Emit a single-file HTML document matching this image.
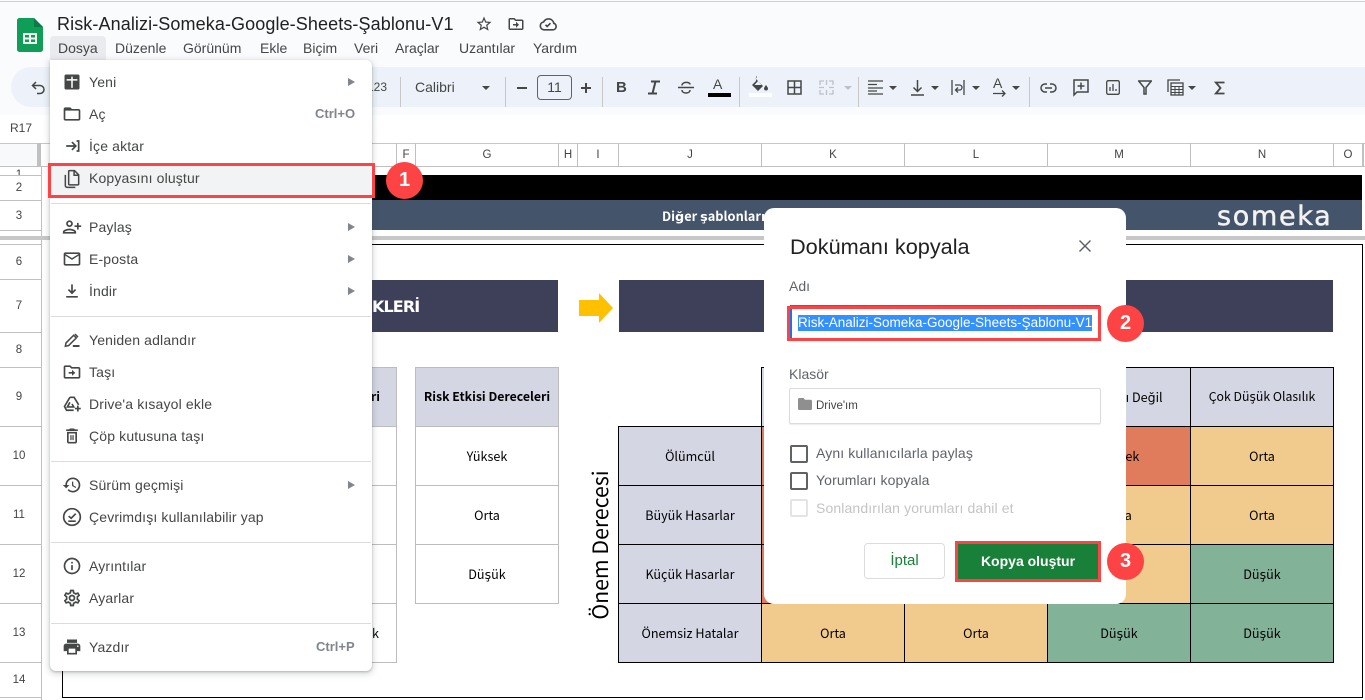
<!DOCTYPE html>
<html><head><meta charset="utf-8"><style>
html,body{margin:0;padding:0}
body{width:1365px;height:700px;overflow:hidden;position:relative;background:#fff;font-family:"Liberation Sans",sans-serif;color:#3c4043}
div,span,svg{position:absolute}
.t{white-space:nowrap;line-height:16px;height:16px}
.m{font-size:14px;color:#444746;top:40px}
.mi{font-size:14px;color:#444746;left:89px;letter-spacing:.15px}
.sc{font-size:13px;font-weight:bold;color:#80868b}
.ar{width:0;height:0;border-left:7px solid #80868b;border-top:4px solid transparent;border-bottom:4px solid transparent;left:348px}
.sep{left:51px;width:320px;height:1px;background:#dadce0}
.i{left:62px;width:20px;height:20px;fill:#444746}
.ch{top:143px;height:23px;border-right:1px solid #c0c0c0;font-size:11.500px;line-height:25px;text-align:center;color:#444;box-sizing:border-box}
.rl{left:0;width:41px;height:1px;background:#c0c0c0}
.rn{left:0;width:38px;text-align:center;font-size:11.500px;line-height:14px;color:#444}
.tv{width:1px;height:30px;top:77px;background:#c7c7c7}
.dd{width:0;height:0;border-top:4px solid #444746;border-left:4px solid transparent;border-right:4px solid transparent;top:86px}
.c{box-sizing:border-box;font-family:"Noto Sans CJK JP","DejaVu Sans",sans-serif;font-size:12.600px;color:#000;display:flex;align-items:center;justify-content:center;white-space:nowrap;padding-bottom:2px}
.b{font-size:12.300px;font-weight:bold}
.k{border:1px solid #000}
.g{border:1px solid #bdbdbd}
.cb{left:790px;width:18px;height:18px;box-sizing:border-box;border:2px solid #5f6368;border-radius:2px}
.cl{left:816px;font-size:14px;color:#5f6368;letter-spacing:.12px}
.badge{width:37px;height:37px;border-radius:50%;background:#fd4343;color:#fff;font-weight:bold;font-size:20px;line-height:37px;text-align:center}
</style></head><body>

<!-- top chrome -->
<div style="left:0;top:0;width:1365px;height:115px;background:#f9fbfd"></div>
<div style="left:0;top:1px;width:1365px;height:1px;background:#d0d0d0"></div>

<svg style="left:17px;top:18px;width:26px;height:34px" viewBox="0 0 26 34"><path d="M2.500 0H17l9 9v22.500a2.500 2.500 0 0 1-2.500 2.500h-21A2.500 2.500 0 0 1 0 31.500V2.500A2.500 2.500 0 0 1 2.500 0z" fill="#0f9d58"/><path d="M17 0l9 9h-9z" fill="#0b7a44"/><path d="M6 15h14v11H6z" fill="#f1f1f1"/><path d="M8 17h4v2.500H8zM14 17h4v2.500h-4zM8 21.500h4V24H8zM14 21.500h4V24h-4z" fill="#0f9d58"/></svg>

<div class="t" style="left:57px;top:14px;font-size:18px;line-height:20px;height:20px;color:#202124;letter-spacing:.1px">Risk-Analizi-Someka-Google-Sheets-Şablonu-V1</div>

<svg style="left:475px;top:15px;width:18px;height:18px;fill:#444746" viewBox="0 0 24 24"><path d="M22 9.240l-7.190-.62L12 2 9.190 8.630 2 9.240l5.460 4.730L5.820 21 12 17.270 18.180 21l-1.630-7.030L22 9.240zM12 15.400l-3.760 2.270 1-4.280-3.320-2.880 4.380-.38L12 6.100l1.710 4.040 4.380.38-3.320 2.880 1 4.280L12 15.400z"/></svg>
<svg style="left:507px;top:15px;width:18px;height:18px;fill:#444746" viewBox="0 0 24 24"><path d="M20 6h-8l-2-2H4c-1.100 0-2 .9-2 2v12c0 1.100.9 2 2 2h16c1.100 0 2-.9 2-2V8c0-1.100-.9-2-2-2zm0 12H4V6h5.170l2 2H20v10zm-8-1l4-4-4-4v3H8v2h4v3z"/></svg>
<svg style="left:538px;top:14px;width:20px;height:20px" viewBox="0 0 24 24" fill="none" stroke="#444746" stroke-width="2"><path d="M7 19h11a4 4 0 0 0 1-7.800A6.500 6.500 0 0 0 6.800 9.500 4.800 4.800 0 0 0 7 19z"/><path d="M9 13l2 2 4-4"/></svg>

<div style="left:50px;top:36px;width:56px;height:24px;background:#e9ebee;border-radius:4px 4px 0 0"></div>
<div class="t m" style="left:58px">Dosya</div>
<div class="t m" style="left:115px">Düzenle</div>
<div class="t m" style="left:183px">Görünüm</div>
<div class="t m" style="left:260px">Ekle</div>
<div class="t m" style="left:303px">Biçim</div>
<div class="t m" style="left:354px">Veri</div>
<div class="t m" style="left:395px">Araçlar</div>
<div class="t m" style="left:459px">Uzantılar</div>
<div class="t m" style="left:533px">Yardım</div>

<!-- toolbar -->
<div style="left:11px;top:67px;width:1400px;height:40px;background:#edf2fa;border-radius:20px"></div>
<svg style="left:30px;top:79px;width:18px;height:18px" viewBox="0 0 18 18" fill="none" stroke="#444746" stroke-width="1.500"><path d="M6 3L2.500 6.500 6 10"/><path d="M3 6.500h7a4 4 0 0 1 0 8H7"/></svg>
<div class="t" style="left:367px;top:79px;font-size:12px;color:#444746">123</div>
<div class="tv" style="left:400px"></div>
<div class="t" style="left:415px;top:79px;font-size:14px;color:#444746">Calibri</div>
<div class="dd" style="left:482px"></div>
<div class="tv" style="left:505px"></div>
<div style="left:517px;top:87px;width:10px;height:1.500px;background:#444746"></div>
<div style="left:537px;top:75px;width:35px;height:25px;box-sizing:border-box;border:1px solid #5f6368;border-radius:4px;font-size:14px;line-height:23px;text-align:center;color:#444746">11</div>
<div style="left:581px;top:87px;width:10px;height:1.500px;background:#444746"></div>
<div style="left:585.250px;top:83px;width:1.500px;height:10px;background:#444746"></div>
<div class="tv" style="left:602px"></div>
<div class="t" style="left:616px;top:80px;font-size:15px;font-weight:bold;color:#444746">B</div>
<svg style="left:647px;top:80px;width:14px;height:15px" viewBox="0 0 14 15" fill="none" stroke="#444746" stroke-width="2"><path d="M4 1.500h9M1 13.500h9M8.500 1.500l-3 12"/></svg>
<svg style="left:678px;top:79px;width:16px;height:17px" viewBox="0 0 16 17" fill="none" stroke="#444746" stroke-width="1.500"><path d="M0 8.500h16"/><path d="M4 6.500c0-4 8-4 8-1M4 11c0 4 8 4 8 0"/></svg>
<div class="t" style="left:713px;top:76px;font-size:14px;color:#444746">A</div>
<div style="left:708px;top:93px;width:23px;height:4px;background:#000"></div>
<div class="tv" style="left:739px"></div>
<svg style="left:751px;top:76px;width:18px;height:17px;fill:#444746" viewBox="0 0 18 17"><path d="M5 0l1 1-1.500 1.500L12 10l-5 5-6-6 4-4zM7 5L3.500 9h7z"/><path d="M15 9c1 1.500 2 2.500 2 3.500a2 2 0 0 1-4 0c0-1 1-2 2-3.500z"/></svg>
<div style="left:749px;top:93px;width:23px;height:4px;background:#fff"></div>
<svg style="left:787px;top:80px;width:15px;height:15px" viewBox="0 0 15 15" fill="none" stroke="#444746" stroke-width="1.500"><path d="M1 1h13v13H1zM7.500 1v13M1 7.500h13"/></svg>
<svg style="left:819px;top:80px;width:15px;height:15px" viewBox="0 0 15 15" fill="none" stroke="#bdc1c6" stroke-width="1.300"><path d="M1 5V1h4M10 1h4v4M1 10v4h4M10 14h4v-4M0 7.500h5M10 7.500h5M7.500 0v5M7.500 10v5"/></svg>
<div class="dd" style="left:844px;border-top-color:#bdc1c6"></div>
<div class="tv" style="left:858px"></div>
<svg style="left:868px;top:80px;width:15px;height:15px" viewBox="0 0 15 15" fill="none" stroke="#444746" stroke-width="1.300"><path d="M0 1h15M0 4.500h9M0 8h15M0 11h9M0 14h15"/></svg>
<div class="dd" style="left:889px"></div>
<svg style="left:911px;top:79px;width:13px;height:17px" viewBox="0 0 13 17" fill="none" stroke="#444746" stroke-width="1.500"><path d="M6.500 1v11M2.500 8.500l4 4 4-4M0 16h13"/></svg>
<div class="dd" style="left:931px"></div>
<svg style="left:951px;top:80px;width:14px;height:15px" viewBox="0 0 14 15" fill="none" stroke="#444746" stroke-width="1.300"><path d="M1 0v15M13 0v15M4 5h4.500a2.500 2.500 0 0 1 0 5H5M7 7.500L4.500 10 7 12.500"/></svg>
<div class="dd" style="left:972px"></div>
<div class="t" style="left:993px;top:75px;font-size:14px;color:#444746">A</div>
<svg style="left:993px;top:90px;width:14px;height:7px" viewBox="0 0 14 7" fill="none" stroke="#444746" stroke-width="1.300"><path d="M0 3.500h12M9 .5l3 3-3 3"/></svg>
<div class="dd" style="left:1012px"></div>
<div class="tv" style="left:1029px"></div>
<svg style="left:1040px;top:83px;width:17px;height:10px" viewBox="0 0 17 10" fill="none" stroke="#444746" stroke-width="1.500"><path d="M7 1H5a4 4 0 0 0 0 8h2M10 1h2a4 4 0 0 1 0 8h-2M5 5h7"/></svg>
<svg style="left:1073px;top:79px;width:16px;height:18px" viewBox="0 0 16 18" fill="none" stroke="#444746" stroke-width="1.500"><path d="M1 1h14v12H4l-3 3zM8 3.500v7M4.500 7h7"/></svg>
<svg style="left:1106px;top:80px;width:14px;height:15px" viewBox="0 0 14 15" fill="none" stroke="#444746" stroke-width="1.300"><rect x=".7" y=".7" width="12.600" height="13.600" rx="1.500"/><path d="M4 11V7M7 11V4M10 11V9"/></svg>
<svg style="left:1138px;top:80px;width:14px;height:15px" viewBox="0 0 14 15" fill="none" stroke="#444746" stroke-width="1.500"><path d="M.7 1h12.600L8 7.500V14H6V7.500z"/></svg>
<svg style="left:1167px;top:79px;width:17px;height:17px" viewBox="0 0 17 17" fill="none" stroke="#444746" stroke-width="1.300"><path d="M1 13V1h12"/><rect x="4" y="4" width="12" height="12"/><path d="M4 7.500h12M4 10.500h12M4 13.500h12M8 7.500V16M12 7.500V16" stroke-width="1"/></svg>
<div class="dd" style="left:1188px"></div>
<svg style="left:1214px;top:81px;width:11px;height:14px" viewBox="0 0 11 14" fill="none" stroke="#444746" stroke-width="1.800"><path d="M10.500 1.500H1.800L6.500 7l-4.700 5.500h8.700"/></svg>

<!-- formula bar -->
<div class="t" style="left:10px;top:120px;font-size:12px;color:#444">R17</div>
<div style="left:0;top:143px;width:1365px;height:1px;background:#c7c7c7"></div>

<!-- col headers -->
<div style="left:0;top:144px;width:37px;height:22px;background:#f8f9fa"></div>
<div style="left:37px;top:143px;width:4px;height:24px;background:#c0c0c0"></div>
<div style="left:41px;top:166px;width:1324px;height:1px;background:#c0c0c0"></div>
<div style="left:0;top:166px;width:41px;height:1px;background:#c0c0c0"></div>
<div class="ch" style="left:375px;width:22px"></div>
<div class="ch" style="left:397px;width:19px">F</div>
<div class="ch" style="left:416px;width:143px">G</div>
<div class="ch" style="left:559px;width:19px">H</div>
<div class="ch" style="left:578px;width:41px">I</div>
<div class="ch" style="left:619px;width:143px">J</div>
<div class="ch" style="left:762px;width:143px">K</div>
<div class="ch" style="left:905px;width:143px">L</div>
<div class="ch" style="left:1048px;width:143px">M</div>
<div class="ch" style="left:1191px;width:143px">N</div>
<div class="ch" style="left:1334px;width:29px">O</div>
<div style="left:1363px;top:143px;width:1px;height:23px;background:#c0c0c0"></div>

<!-- row headers -->
<div style="left:41px;top:167px;width:1px;height:533px;background:#c0c0c0"></div>
<div class="rl" style="top:175px"></div><div class="rl" style="top:200px"></div><div class="rl" style="top:230px"></div><div class="rl" style="top:244px"></div><div class="rl" style="top:279px"></div><div class="rl" style="top:332px"></div><div class="rl" style="top:367px"></div><div class="rl" style="top:426px"></div><div class="rl" style="top:485px"></div><div class="rl" style="top:544px"></div><div class="rl" style="top:603px"></div><div class="rl" style="top:662px"></div><div class="rl" style="top:697px"></div>
<div class="rn" style="top:168px;height:7px;overflow:hidden">1</div>
<div class="rn" style="top:181px">2</div>
<div class="rn" style="top:209px">3</div>
<div class="rn" style="top:255px">6</div>
<div class="rn" style="top:299px">7</div>
<div class="rn" style="top:343px">8</div>
<div class="rn" style="top:390px">9</div>
<div class="rn" style="top:449px">10</div>
<div class="rn" style="top:508px">11</div>
<div class="rn" style="top:567px">12</div>
<div class="rn" style="top:626px">13</div>
<div class="rn" style="top:673px">14</div>

<!-- sheet -->
<div style="left:62px;top:175px;width:1300px;height:25px;background:#000"></div>
<div style="left:62px;top:200px;width:1300px;height:30px;background:#44546a"></div>
<div class="t" style="left:662px;top:208px;font-family:'Noto Sans CJK JP','DejaVu Sans',sans-serif;font-size:12.800px;font-weight:bold;color:#fff">Diğer şablonları</div>
<div class="t" style="left:1217px;top:202px;height:30px;line-height:30px;font-size:27px;color:#f2f2f2;font-family:'DejaVu Sans',sans-serif;letter-spacing:1.700px;-webkit-text-stroke:.5px #f2f2f2">someka</div>

<div style="left:0;top:236px;width:1365px;height:4px;background:#c7c7c7"></div>
<div style="left:62px;top:244px;width:1301px;height:454px;box-sizing:border-box;border:1px solid #000"></div>

<div style="left:64px;top:280px;width:494px;height:52px;background:#3e4059"></div>
<div class="t" style="left:372px;top:297px;height:20px;line-height:20px;font-family:'DejaVu Sans',sans-serif;font-size:16px;font-weight:bold;color:#fff;letter-spacing:-.9px">KLERİ</div>
<svg style="left:579px;top:293px;width:35px;height:30px" viewBox="0 0 35 30"><path d="M0 7h20V0l14 15-14 15v-7H0z" fill="#ffc000"/></svg>
<div style="left:619px;top:280px;width:714px;height:52px;background:#3e4059"></div>

<!-- left tables -->
<div class="c g b" style="left:64px;top:367px;width:333px;height:60px;background:#d4d6e4;justify-content:flex-end;padding-right:16px">ri</div>
<div class="c g" style="left:64px;top:426px;width:333px;height:60px"></div>
<div class="c g" style="left:64px;top:485px;width:333px;height:60px"></div>
<div class="c g" style="left:64px;top:544px;width:333px;height:60px"></div>
<div class="c g" style="left:64px;top:603px;width:333px;height:60px;justify-content:flex-end;padding-right:17px">k</div>

<div class="c g b" style="left:415px;top:367px;width:144px;height:60px;background:#d4d6e4">Risk Etkisi Dereceleri</div>
<div class="c g" style="left:415px;top:426px;width:144px;height:60px">Yüksek</div>
<div class="c g" style="left:415px;top:485px;width:144px;height:60px">Orta</div>
<div class="c g" style="left:415px;top:544px;width:144px;height:60px">Düşük</div>

<div class="t" style="left:525px;top:532.500px;width:150px;height:24px;line-height:24px;text-align:center;font-family:'Noto Sans CJK JP','DejaVu Sans',sans-serif;font-size:21.300px;color:#000;transform:rotate(-90deg)">Önem Derecesi</div>

<!-- matrix -->
<div class="c k" style="left:618px;top:426px;width:144px;height:60px;background:#d4d6e4">Ölümcül</div>
<div class="c k" style="left:618px;top:485px;width:144px;height:60px;background:#d4d6e4">Büyük Hasarlar</div>
<div class="c k" style="left:618px;top:544px;width:144px;height:60px;background:#d4d6e4">Küçük Hasarlar</div>
<div class="c k" style="left:618px;top:603px;width:144px;height:60px;background:#d4d6e4">Önemsiz Hatalar</div>

<div class="c k" style="left:761px;top:367px;width:144px;height:60px;background:#d4d6e4"></div>
<div class="c k" style="left:904px;top:367px;width:144px;height:60px;background:#d4d6e4"></div>
<div class="c k" style="left:1047px;top:367px;width:144px;height:60px;background:#d4d6e4">Pek Olası Değil</div>
<div class="c k" style="left:1190px;top:367px;width:144px;height:60px;background:#d4d6e4;font-size:12.300px">Çok Düşük Olasılık</div>

<div class="c k" style="left:761px;top:426px;width:144px;height:60px;background:#e07b5c"></div>
<div class="c k" style="left:761px;top:485px;width:144px;height:60px;background:#e07b5c"></div>
<div class="c k" style="left:761px;top:544px;width:144px;height:60px;background:#e07b5c"></div>
<div class="c k" style="left:904px;top:426px;width:144px;height:60px;background:#e07b5c"></div>
<div class="c k" style="left:904px;top:485px;width:144px;height:60px;background:#f0cb8d"></div>
<div class="c k" style="left:904px;top:544px;width:144px;height:60px;background:#f0cb8d"></div>
<div class="c k" style="left:1047px;top:426px;width:144px;height:60px;background:#e07b5c">Yüksek</div>
<div class="c k" style="left:1047px;top:485px;width:144px;height:60px;background:#f0cb8d">Orta</div>
<div class="c k" style="left:1047px;top:544px;width:144px;height:60px;background:#f0cb8d">Orta</div>
<div class="c k" style="left:1190px;top:426px;width:144px;height:60px;background:#f0cb8d">Orta</div>
<div class="c k" style="left:1190px;top:485px;width:144px;height:60px;background:#f0cb8d">Orta</div>
<div class="c k" style="left:1190px;top:544px;width:144px;height:60px;background:#82b298">Düşük</div>
<div class="c k" style="left:761px;top:603px;width:144px;height:60px;background:#f0cb8d">Orta</div>
<div class="c k" style="left:904px;top:603px;width:144px;height:60px;background:#f0cb8d">Orta</div>
<div class="c k" style="left:1047px;top:603px;width:144px;height:60px;background:#82b298">Düşük</div>
<div class="c k" style="left:1190px;top:603px;width:144px;height:60px;background:#82b298">Düşük</div>

<!-- menu -->
<div style="left:50px;top:60px;width:322px;height:611px;background:#fff;border-radius:0 6px 6px 6px;box-shadow:0 2px 6px 2px rgba(60,64,67,.15),0 1px 2px rgba(60,64,67,.3)"></div>
<div style="left:51px;top:163px;width:320px;height:32px;background:#f1f3f4"></div>

<div class="t mi" style="top:74px">Yeni</div><div class="ar" style="top:78px"></div>
<div class="t mi" style="top:106px">Aç</div><div class="t sc" style="top:106px;left:315px">Ctrl+O</div>
<div class="t mi" style="top:138px">İçe aktar</div>
<div class="t mi" style="top:170px">Kopyasını oluştur</div>
<div class="sep" style="top:203px"></div>
<div class="t mi" style="top:219px">Paylaş</div><div class="ar" style="top:223px"></div>
<div class="t mi" style="top:251px">E-posta</div><div class="ar" style="top:255px"></div>
<div class="t mi" style="top:283px">İndir</div><div class="ar" style="top:287px"></div>
<div class="sep" style="top:316px"></div>
<div class="t mi" style="top:332px">Yeniden adlandır</div>
<div class="t mi" style="top:364px">Taşı</div>
<div class="t mi" style="top:396px">Drive'a kısayol ekle</div>
<div class="t mi" style="top:428px">Çöp kutusuna taşı</div>
<div class="sep" style="top:461px"></div>
<div class="t mi" style="top:477px">Sürüm geçmişi</div><div class="ar" style="top:481px"></div>
<div class="t mi" style="top:509px">Çevrimdışı kullanılabilir yap</div>
<div class="sep" style="top:542px"></div>
<div class="t mi" style="top:558px">Ayrıntılar</div>
<div class="t mi" style="top:590px">Ayarlar</div>
<div class="sep" style="top:623px"></div>
<div class="t mi" style="top:639px">Yazdır</div><div class="t sc" style="top:639px;left:316px">Ctrl+P</div>

<!-- menu icons -->
<svg class="i" style="top:72px" viewBox="0 0 24 24"><rect x="3" y="3" width="18" height="18" rx="2"/><path d="M5.500 8.600h13v1.800h-13zM11.100 5.500h1.800v13.500h-1.800z" fill="#fff"/></svg>
<svg class="i" style="top:104px" viewBox="0 0 24 24"><path d="M20 6h-8l-2-2H4c-1.100 0-2 .9-2 2v12c0 1.100.9 2 2 2h16c1.100 0 2-.9 2-2V8c0-1.100-.9-2-2-2zm0 12H4V8h16v10z"/></svg>
<svg class="i" style="top:136px" viewBox="0 0 24 24"><path d="M5 11h9.200l-3-3 1.400-1.400L18 12l-5.400 5.400-1.400-1.400 3-3H5zM17.500 5H21v14h-3.500v-2H19V7h-1.500z"/></svg>
<svg class="i" style="top:169px;fill:none;stroke:#444746;stroke-width:1.800" viewBox="0 0 24 24"><path d="M4 7v13a2 2 0 0 0 2 2h10"/><path d="M8 3a1 1 0 0 1 1-1h6l5 5v11a1 1 0 0 1-1 1H9a1 1 0 0 1-1-1z"/><path d="M14.500 2v5.500H20"/></svg>
<svg class="i" style="top:217px" viewBox="0 0 24 24"><g transform="matrix(-1 0 0 1 24 0)"><path d="M15 12c2.210 0 4-1.790 4-4s-1.790-4-4-4-4 1.790-4 4 1.790 4 4 4zm0-6c1.100 0 2 .9 2 2s-.9 2-2 2-2-.9-2-2 .9-2 2-2zm0 8c-2.670 0-8 1.340-8 4v2h16v-2c0-2.660-5.330-4-8-4zm-6 4c.22-.72 3.310-2 6-2 2.700 0 5.800 1.290 6 2H9zm-3-3v-3h3v-2H6V7H4v3H1v2h3v3h2z"/></g></svg>
<svg class="i" style="top:249px" viewBox="0 0 24 24"><path d="M22 6c0-1.100-.9-2-2-2H4c-1.100 0-2 .9-2 2v12c0 1.100.9 2 2 2h16c1.100 0 2-.9 2-2V6zm-2 0l-8 5-8-5h16zm0 12H4V8l8 5 8-5v10z"/></svg>
<svg class="i" style="top:281px" viewBox="0 0 24 24"><path d="M11 4h2v8.200l2.600-2.600L17 11l-5 5-5-5 1.400-1.400 2.600 2.600zM5 18h14v2H5z"/></svg>
<svg class="i" style="top:330px;fill:none;stroke:#444746;stroke-width:1.800" viewBox="0 0 24 24"><path d="M4 19.500l.8-4L14 6.300l3.200 3.200-9.200 9.200zM15.500 4.800l3.700 3.700"/><path d="M13 19.200h8" stroke-width="2.400"/></svg>
<svg class="i" style="top:362px" viewBox="0 0 24 24"><path d="M20 6h-8l-2-2H4c-1.100 0-2 .9-2 2v12c0 1.100.9 2 2 2h16c1.100 0 2-.9 2-2V8c0-1.100-.9-2-2-2zm0 12H4V6h5.170l2 2H20v10zm-8-1.500l4-3.500-4-3.500V12H8v2h4z"/></svg>
<svg class="i" style="top:394px;fill:none;stroke:#444746;stroke-width:2" viewBox="0 0 24 24"><path d="M9.500 4h5L20 13M9.500 4L3 15l2.500 4.500H14M9.500 10L6.500 15.500H14l-2-3.500"/><path d="M19 14v7M15.500 17.500h7"/></svg>
<svg class="i" style="top:426px" viewBox="0 0 24 24"><path d="M6 19c0 1.100.9 2 2 2h8c1.100 0 2-.9 2-2V7H6v12zM8 9h8v10H8V9zm7.500-5l-1-1h-5l-1 1H5v2h14V4zM10 11h1.500v6H10zM12.500 11H14v6h-1.500z"/></svg>
<svg class="i" style="top:475px" viewBox="0 0 24 24"><path d="M13 3c-4.970 0-9 4.030-9 9H1l3.890 3.890.07.14L9 12H6c0-3.870 3.130-7 7-7s7 3.130 7 7-3.130 7-7 7c-1.930 0-3.680-.79-4.940-2.060l-1.420 1.420C8.270 19.990 10.510 21 13 21c4.970 0 9-4.030 9-9s-4.030-9-9-9zm-1 5v5l4.280 2.540.72-1.210-3.500-2.080V8H12z"/></svg>
<svg class="i" style="top:507px;fill:none;stroke:#444746;stroke-width:2" viewBox="0 0 24 24"><circle cx="12" cy="12" r="10"/><path d="M8 11l3 2.500L16.500 8M7.500 17h9"/></svg>
<svg class="i" style="top:556px" viewBox="0 0 24 24"><path d="M11 7h2v2h-2zm0 4h2v6h-2zm1-9C6.480 2 2 6.480 2 12s4.480 10 10 10 10-4.480 10-10S17.520 2 12 2zm0 18c-4.410 0-8-3.590-8-8s3.590-8 8-8 8 3.590 8 8-3.590 8-8 8z"/></svg>
<svg class="i" style="top:588px" viewBox="0 0 24 24"><path d="M19.430 12.980c.04-.32.07-.64.07-.98 0-.34-.03-.66-.07-.98l2.110-1.650c.19-.15.24-.42.12-.64l-2-3.460c-.09-.16-.26-.25-.44-.25-.06 0-.12.01-.17.03l-2.490 1c-.52-.4-1.080-.73-1.690-.98l-.38-2.650C14.460 2.180 14.250 2 14 2h-4c-.25 0-.46.18-.49.42l-.38 2.650c-.61.25-1.170.59-1.690.98l-2.490-1c-.06-.02-.12-.03-.18-.03-.17 0-.34.09-.43.25l-2 3.460c-.13.22-.07.49.12.64l2.110 1.650c-.04.32-.07.65-.07.98 0 .33.03.66.07.98l-2.110 1.650c-.19.15-.24.42-.12.64l2 3.460c.09.16.26.25.44.25.06 0 .12-.01.17-.03l2.490-1c.52.4 1.080.73 1.690.98l.38 2.650c.03.24.24.42.49.42h4c.25 0 .46-.18.49-.42l.38-2.650c.61-.25 1.170-.59 1.690-.98l2.490 1c.06.02.12.03.18.03.17 0 .34-.09.43-.25l2-3.460c.12-.22.07-.49-.12-.64l-2.110-1.650zm-1.980-1.710c.04.31.05.52.05.73 0 .21-.02.43-.05.73l-.14 1.130.89.7 1.080.84-.7 1.210-1.270-.51-1.040-.42-.9.68c-.43.32-.84.56-1.250.73l-1.060.43-.16 1.130-.2 1.350h-1.400l-.19-1.350-.16-1.130-1.060-.43c-.43-.18-.83-.41-1.230-.71l-.91-.7-1.060.43-1.270.51-.7-1.210 1.080-.84.89-.7-.14-1.130c-.03-.31-.05-.54-.05-.74s.02-.43.05-.73l.14-1.130-.89-.7-1.080-.84.7-1.210 1.270.51 1.040.42.9-.68c.43-.32.84-.56 1.250-.73l1.060-.43.16-1.130.2-1.350h1.390l.19 1.350.16 1.130 1.060.43c.43.18.83.41 1.230.71l.91.7 1.060-.43 1.270-.51.7 1.210-1.070.85-.89.7.14 1.130zM12 8c-2.210 0-4 1.790-4 4s1.790 4 4 4 4-1.790 4-4-1.790-4-4-4zm0 6c-1.100 0-2-.9-2-2s.9-2 2-2 2 .9 2 2-.9 2-2 2z"/></svg>
<svg class="i" style="top:637px" viewBox="0 0 24 24"><path d="M19 8H5c-1.660 0-3 1.340-3 3v6h4v4h12v-4h4v-6c0-1.660-1.340-3-3-3zm-3 11H8v-5h8v5zm3-7c-.55 0-1-.45-1-1s.45-1 1-1 1 .45 1 1-.45 1-1 1zm-1-9H6v4h12V3z"/></svg>

<!-- highlight 1 -->
<div style="left:48px;top:163px;width:327px;height:35px;box-sizing:border-box;border:3px solid #fd4343"></div>
<div class="badge" style="left:386px;top:162px">1</div>

<!-- dialog -->
<div style="left:764px;top:208px;width:362px;height:396px;background:#fff;border-radius:10px"></div>
<div class="t" style="left:790px;top:235px;height:24px;line-height:24px;font-size:21.700px;color:#202124">Dokümanı kopyala</div>
<svg style="left:1078px;top:239px;width:14px;height:14px" viewBox="0 0 14 14" fill="none" stroke="#5f6368" stroke-width="1.500"><path d="M1.500 1.500l11 11M12.500 1.500l-11 11"/></svg>
<div class="t" style="left:789px;top:278px;font-size:14px;color:#5f6368">Adı</div>

<div style="left:790px;top:305px;width:310px;height:2px;background:#1a73e8"></div>
<div style="left:790px;top:305px;width:2px;height:34px;background:#1a73e8"></div>
<div style="left:798px;top:315px;width:294px;height:16px;background:#3390ff"></div>
<div class="t" style="left:798px;top:315px;font-size:13.500px;color:#fff">Risk-Analizi-Someka-Google-Sheets-Şablonu-V1</div>
<div style="left:787px;top:306px;width:314px;height:35px;box-sizing:border-box;border:3px solid #fd4343"></div>
<div class="badge" style="left:1107px;top:305px">2</div>

<div class="t" style="left:789px;top:366px;font-size:14px;color:#5f6368">Klasör</div>
<div style="left:789px;top:388px;width:312px;height:36px;box-sizing:border-box;border:1px solid #dadce0;border-radius:2px;box-shadow:0 1px 1px rgba(0,0,0,.08)"></div>
<svg style="left:798px;top:398px;width:14px;height:12px" viewBox="0 0 14 12"><path d="M5.500 0H1.300C.6 0 0 .6 0 1.300v9.400C0 11.400.6 12 1.300 12h11.400c.7 0 1.300-.6 1.300-1.300V3c0-.7-.6-1.300-1.300-1.300H7z" fill="#8f8f8f"/></svg>
<div class="t" style="left:816px;top:398px;font-size:11.500px;color:#444">Drive'ım</div>

<div class="cb" style="top:445px"></div><div class="t cl" style="top:445px">Aynı kullanıcılarla paylaş</div>
<div class="cb" style="top:472px"></div><div class="t cl" style="top:472px">Yorumları kopyala</div>
<div class="cb" style="top:499px;border-color:#e4e4e4"></div><div class="t cl" style="top:500px;color:#c4c4c4">Sonlandırılan yorumları dahil et</div>

<div style="left:864px;top:543px;width:81px;height:36px;box-sizing:border-box;border:1px solid #dadce0;border-radius:4px;font-size:15px;line-height:34px;text-align:center;color:#188038">İptal</div>
<div style="left:955px;top:541px;width:146px;height:41px;box-sizing:border-box;border:3px solid #fd4343;background:#188038;font-size:14px;font-weight:bold;line-height:35px;text-align:center;color:#fff">Kopya oluştur</div>
<div class="badge" style="left:1107px;top:543px">3</div>

</body></html>
